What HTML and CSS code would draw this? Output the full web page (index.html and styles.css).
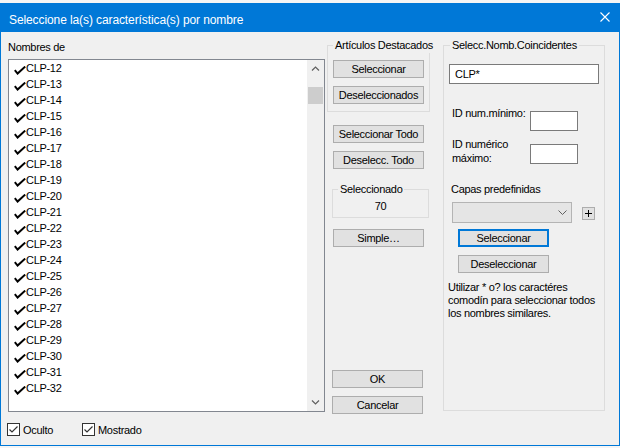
FILE: index.html
```html
<!DOCTYPE html>
<html lang="es">
<head>
<meta charset="utf-8">
<title>Seleccione la(s) característica(s) por nombre</title>
<link rel="stylesheet" href="styles.css">
</head>
<body>
<div class="window">
  <div class="titlebar">
    <span class="title">Seleccione la(s) característica(s) por nombre</span>
    <svg class="close" viewBox="0 0 10 10" width="10" height="10"><path d="M0.5 0.5 L9.5 9.5 M9.5 0.5 L0.5 9.5" stroke="#fff" stroke-width="1.1" fill="none"/></svg>
  </div>
  <div class="content">
    <div class="col-left">
      <div class="label">Nombres de</div>
      <div class="listbox">
        <ul class="items">
          <li class="item"><svg class="check" viewBox="0 0 12 9" width="12" height="9"><path d="M0.8 4.2 L3.6 7.6 L11.2 0.6" stroke="#000" stroke-width="2" fill="none"/></svg><span>CLP-12</span></li>
          <li class="item"><svg class="check" viewBox="0 0 12 9" width="12" height="9"><path d="M0.8 4.2 L3.6 7.6 L11.2 0.6" stroke="#000" stroke-width="2" fill="none"/></svg><span>CLP-13</span></li>
          <li class="item"><svg class="check" viewBox="0 0 12 9" width="12" height="9"><path d="M0.8 4.2 L3.6 7.6 L11.2 0.6" stroke="#000" stroke-width="2" fill="none"/></svg><span>CLP-14</span></li>
          <li class="item"><svg class="check" viewBox="0 0 12 9" width="12" height="9"><path d="M0.8 4.2 L3.6 7.6 L11.2 0.6" stroke="#000" stroke-width="2" fill="none"/></svg><span>CLP-15</span></li>
          <li class="item"><svg class="check" viewBox="0 0 12 9" width="12" height="9"><path d="M0.8 4.2 L3.6 7.6 L11.2 0.6" stroke="#000" stroke-width="2" fill="none"/></svg><span>CLP-16</span></li>
          <li class="item"><svg class="check" viewBox="0 0 12 9" width="12" height="9"><path d="M0.8 4.2 L3.6 7.6 L11.2 0.6" stroke="#000" stroke-width="2" fill="none"/></svg><span>CLP-17</span></li>
          <li class="item"><svg class="check" viewBox="0 0 12 9" width="12" height="9"><path d="M0.8 4.2 L3.6 7.6 L11.2 0.6" stroke="#000" stroke-width="2" fill="none"/></svg><span>CLP-18</span></li>
          <li class="item"><svg class="check" viewBox="0 0 12 9" width="12" height="9"><path d="M0.8 4.2 L3.6 7.6 L11.2 0.6" stroke="#000" stroke-width="2" fill="none"/></svg><span>CLP-19</span></li>
          <li class="item"><svg class="check" viewBox="0 0 12 9" width="12" height="9"><path d="M0.8 4.2 L3.6 7.6 L11.2 0.6" stroke="#000" stroke-width="2" fill="none"/></svg><span>CLP-20</span></li>
          <li class="item"><svg class="check" viewBox="0 0 12 9" width="12" height="9"><path d="M0.8 4.2 L3.6 7.6 L11.2 0.6" stroke="#000" stroke-width="2" fill="none"/></svg><span>CLP-21</span></li>
          <li class="item"><svg class="check" viewBox="0 0 12 9" width="12" height="9"><path d="M0.8 4.2 L3.6 7.6 L11.2 0.6" stroke="#000" stroke-width="2" fill="none"/></svg><span>CLP-22</span></li>
          <li class="item"><svg class="check" viewBox="0 0 12 9" width="12" height="9"><path d="M0.8 4.2 L3.6 7.6 L11.2 0.6" stroke="#000" stroke-width="2" fill="none"/></svg><span>CLP-23</span></li>
          <li class="item"><svg class="check" viewBox="0 0 12 9" width="12" height="9"><path d="M0.8 4.2 L3.6 7.6 L11.2 0.6" stroke="#000" stroke-width="2" fill="none"/></svg><span>CLP-24</span></li>
          <li class="item"><svg class="check" viewBox="0 0 12 9" width="12" height="9"><path d="M0.8 4.2 L3.6 7.6 L11.2 0.6" stroke="#000" stroke-width="2" fill="none"/></svg><span>CLP-25</span></li>
          <li class="item"><svg class="check" viewBox="0 0 12 9" width="12" height="9"><path d="M0.8 4.2 L3.6 7.6 L11.2 0.6" stroke="#000" stroke-width="2" fill="none"/></svg><span>CLP-26</span></li>
          <li class="item"><svg class="check" viewBox="0 0 12 9" width="12" height="9"><path d="M0.8 4.2 L3.6 7.6 L11.2 0.6" stroke="#000" stroke-width="2" fill="none"/></svg><span>CLP-27</span></li>
          <li class="item"><svg class="check" viewBox="0 0 12 9" width="12" height="9"><path d="M0.8 4.2 L3.6 7.6 L11.2 0.6" stroke="#000" stroke-width="2" fill="none"/></svg><span>CLP-28</span></li>
          <li class="item"><svg class="check" viewBox="0 0 12 9" width="12" height="9"><path d="M0.8 4.2 L3.6 7.6 L11.2 0.6" stroke="#000" stroke-width="2" fill="none"/></svg><span>CLP-29</span></li>
          <li class="item"><svg class="check" viewBox="0 0 12 9" width="12" height="9"><path d="M0.8 4.2 L3.6 7.6 L11.2 0.6" stroke="#000" stroke-width="2" fill="none"/></svg><span>CLP-30</span></li>
          <li class="item"><svg class="check" viewBox="0 0 12 9" width="12" height="9"><path d="M0.8 4.2 L3.6 7.6 L11.2 0.6" stroke="#000" stroke-width="2" fill="none"/></svg><span>CLP-31</span></li>
          <li class="item"><svg class="check" viewBox="0 0 12 9" width="12" height="9"><path d="M0.8 4.2 L3.6 7.6 L11.2 0.6" stroke="#000" stroke-width="2" fill="none"/></svg><span>CLP-32</span></li>
        </ul>
        <div class="vscroll">
          <div class="sb-btn"><svg viewBox="0 0 9 5" width="9" height="5"><path d="M1 4.5 L4.5 1 L8 4.5" stroke="#606060" stroke-width="1.2" fill="none"/></svg></div>
          <div class="sb-thumb"></div>
          <div class="sb-track"></div>
          <div class="sb-btn"><svg viewBox="0 0 9 5" width="9" height="5"><path d="M1 0.5 L4.5 4 L8 0.5" stroke="#606060" stroke-width="1.2" fill="none"/></svg></div>
        </div>
      </div>
      <div class="checks">
        <div class="chk"><span class="chk-box"><svg viewBox="0 0 11 11" width="11" height="11"><path d="M1.5 5.5 L4 8 L9.5 2.5" stroke="#333" stroke-width="1.2" fill="none"/></svg></span><span class="chk-label">Oculto</span></div>
        <div class="chk chk-2"><span class="chk-box"><svg viewBox="0 0 11 11" width="11" height="11"><path d="M1.5 5.5 L4 8 L9.5 2.5" stroke="#333" stroke-width="1.2" fill="none"/></svg></span><span class="chk-label">Mostrado</span></div>
      </div>
    </div>

    <div class="col-mid">
      <fieldset class="grp grp-art">
        <legend>Artículos Destacados</legend>
        <button class="btn grp-btn">Seleccionar</button>
        <button class="btn grp-btn btn-gap">Deseleccionados</button>
      </fieldset>
      <button class="btn mid-btn btn-todo">Seleccionar Todo</button>
      <button class="btn mid-btn btn-gap">Deselecc. Todo</button>
      <fieldset class="grp grp-sel">
        <legend>Seleccionado</legend>
        <div class="count">70</div>
      </fieldset>
      <button class="btn mid-btn btn-simple">Simple…</button>
      <button class="btn btn-ok">OK</button>
      <button class="btn btn-cancel">Cancelar</button>
    </div>

    <div class="col-right">
      <fieldset class="grp grp-match">
        <legend>Selecc.Nomb.Coincidentes</legend>
        <div class="match-body">
          <input class="field field-name" type="text" value="CLP*">
          <div class="id-row id-row-1">
            <span class="id-label">ID num.mínimo:</span>
            <input class="field field-id" type="text" value="">
          </div>
          <div class="id-row id-row-2">
            <span class="id-label id-label-2">ID numérico<br>máximo:</span>
            <input class="field field-id field-id-2" type="text" value="">
          </div>
          <div class="capas-label">Capas predefinidas</div>
          <div class="combo-row">
            <div class="combo"><svg viewBox="0 0 9 5" width="9" height="5"><path d="M0.5 0.5 L4.5 4.5 L8.5 0.5" stroke="#606060" stroke-width="1" fill="none"/></svg></div>
            <div class="plus"><svg viewBox="0 0 11 11" width="11" height="11"><path d="M5.5 2 V9 M2 5.5 H9" stroke="#000" stroke-width="1" fill="none"/></svg></div>
          </div>
          <button class="btn btn-focus">Seleccionar</button>
          <button class="btn btn-desel">Deseleccionar</button>
          <p class="hint">Utilizar * o? los caractéres<br>comodín para seleccionar todos<br>los nombres similares.</p>
        </div>
      </fieldset>
    </div>
  </div>
</div>
</body>
</html>
```

FILE: styles.css
```css
* { box-sizing: border-box; }

html, body {
  margin: 0;
  padding: 0;
}

body {
  width: 620px;
  height: 448px;
  overflow: hidden;
  background: #f5f5f5;
  font-family: "Liberation Sans", Arial, sans-serif;
  font-size: 11px;
  letter-spacing: -0.3px;
  color: #000;
}

.window {
  margin-top: 3px;
  width: 620px;
  height: 443px;
  border: 1px solid #0078d7;
  background: #f0f0f0;
  display: flex;
  flex-direction: column;
}

.titlebar {
  flex: none;
  height: 28px;
  background: #0078d7;
  color: #fff;
  display: flex;
  align-items: flex-start;
  justify-content: space-between;
}

.title {
  font-size: 12px;
  letter-spacing: -0.1px;
  line-height: 16px;
  padding-top: 8px;
  padding-left: 8px;
  white-space: nowrap;
}

.close {
  margin-top: 8px;
  margin-right: 9px;
}

.content {
  flex: 1;
  display: flex;
}

/* left column */
.col-left {
  width: 317px;
  margin-left: 7px;
  padding-top: 8px;
  display: flex;
  flex-direction: column;
}

.label { line-height: 15px; }

.listbox {
  margin-top: 4px;
  height: 353px;
  border: 1px solid #828790;
  background: #fff;
  display: flex;
}

.items {
  list-style: none;
  margin: 0;
  padding: 0;
  flex: 1;
}

.item {
  height: 16px;
  line-height: 16px;
  display: flex;
  align-items: flex-start;
}

.check {
  flex: none;
  margin-left: 5px;
  margin-top: 6px;
}

.vscroll {
  width: 17px;
  background: #f0f0f0;
  display: flex;
  flex-direction: column;
}

.sb-btn {
  height: 17px;
  display: flex;
  align-items: center;
  justify-content: center;
}

.sb-thumb {
  margin: 10px 1px 0 1px;
  height: 17px;
  background: #cdcdcd;
}

.sb-track { flex: 1; }

.checks {
  margin-top: 11px;
  margin-left: -1px;
  display: flex;
  align-items: flex-start;
}

.chk {
  display: flex;
  align-items: flex-start;
}

.chk-2 { margin-left: 29px; }

.chk-box {
  width: 13px;
  height: 13px;
  border: 1px solid #333;
  background: #fff;
  display: flex;
  align-items: center;
  justify-content: center;
}

.chk-label {
  margin-left: 3px;
  line-height: 15px;
}

/* group boxes */
.grp {
  margin: 0;
  padding: 0;
  min-width: 0;
  border: 1px solid #dcdcdc;
}

.grp legend {
  margin-left: 5px;
  padding: 0 2px;
  line-height: 15px;
  white-space: nowrap;
}

/* buttons */
.btn {
  display: block;
  width: 91px;
  height: 18px;
  margin: 0;
  padding: 0;
  border: 1px solid #adadad;
  background: #e1e1e1;
  font: inherit;
  letter-spacing: inherit;
  color: #000;
  line-height: 16px;
  text-align: center;
  white-space: nowrap;
}

.btn-gap { margin-top: 8px; }

/* middle column */
.col-mid {
  width: 116px;
  margin-left: 2px;
  padding-top: 6px;
  padding-bottom: 31px;
  display: flex;
  flex-direction: column;
  align-items: flex-start;
}

.grp-art {
  width: 103px;
  padding: 7px 0 7px 0;
}

.grp-btn { margin-left: 5px; }

.mid-btn { margin-left: 6px; }

.btn-todo { margin-top: 13px; }

.grp-sel {
  width: 97px;
  margin-top: 13px;
  margin-left: 5px;
  padding: 2px 0 3px 0;
}

.count {
  line-height: 15px;
  text-align: center;
}

.btn-simple { margin-top: 11px; }

.btn-ok {
  margin-top: auto;
  margin-left: 5px;
}

.btn-cancel {
  margin-top: 8px;
  margin-left: 5px;
}

/* right column */
.col-right {
  width: 162px;
  padding-top: 6px;
}

.grp-match {
  width: 162px;
  height: 373px;
}

.grp-match legend { margin-left: 6px; }

.match-body {
  display: flex;
  flex-direction: column;
  align-items: flex-start;
}

.field {
  display: block;
  height: 20px;
  margin: 0;
  border: 1px solid #7a7a7a;
  background: #fff;
  font: inherit;
  letter-spacing: inherit;
  color: #000;
  outline: none;
}

.field-name {
  margin-top: 11px;
  margin-left: 5px;
  width: 150px;
  padding: 0 0 0 5px;
}

.id-row {
  display: flex;
  align-items: flex-start;
}

.id-row-1 { margin-top: 22px; }
.id-row-2 { margin-top: 6px; }

.id-label {
  width: 78px;
  margin-left: 8px;
  line-height: 15px;
  white-space: nowrap;
}

.id-label-2 { line-height: 14px; }

.field-id {
  width: 48px;
  margin-top: 5px;
  padding: 0;
}

.field-id-2 { margin-top: 7px; }

.capas-label {
  margin-top: 17px;
  margin-left: 7px;
  line-height: 15px;
}

.combo-row {
  margin-top: 5px;
  margin-left: 8px;
  display: flex;
  align-items: flex-start;
}

.combo {
  width: 120px;
  height: 21px;
  border: 1px solid #b4b4b4;
  background: #e5e5e5;
  display: flex;
  align-items: center;
  justify-content: flex-end;
  padding-right: 4px;
}

.plus {
  margin-left: 10px;
  margin-top: 5px;
  width: 13px;
  height: 13px;
  border: 1px solid #adadad;
  background: #e1e1e1;
  display: flex;
  align-items: center;
  justify-content: center;
}

.btn-focus {
  margin-top: 6px;
  margin-left: 14px;
  border: 2px solid #0078d7;
  line-height: 14px;
}

.btn-desel {
  margin-top: 8px;
  margin-left: 14px;
}

.hint {
  margin: 8px 0 0 4px;
  line-height: 13px;
  white-space: nowrap;
}
```
